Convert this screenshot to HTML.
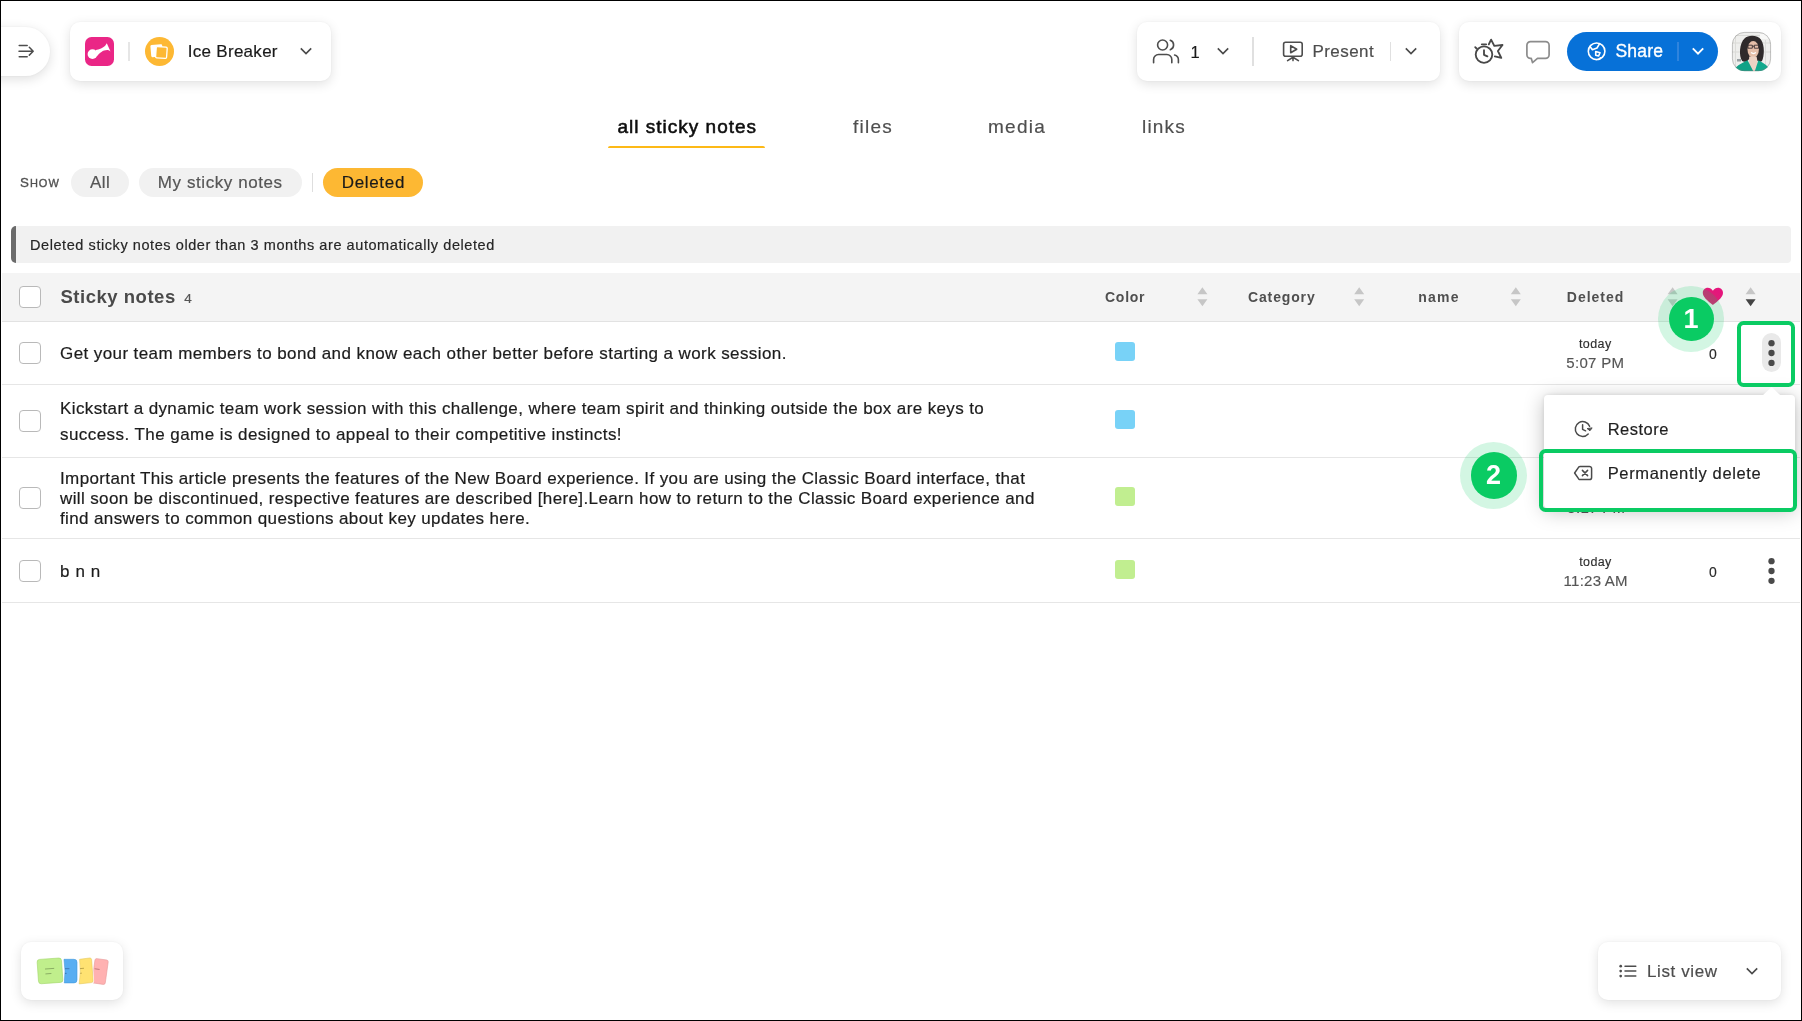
<!DOCTYPE html>
<html lang="en">
<head>
<meta charset="utf-8">
<title>Ice Breaker - Deleted sticky notes</title>
<style>
*{box-sizing:border-box;margin:0;padding:0}
html,body{width:1802px;height:1021px;overflow:hidden;background:#fff}
body{font-family:"Liberation Sans",sans-serif;color:#1f1f1f;position:relative}
.abs{position:absolute}
svg{position:absolute;overflow:visible}
.t{position:absolute;white-space:nowrap;line-height:1}
.med{-webkit-text-stroke:.35px currentColor}
.rg{-webkit-text-stroke:.18px currentColor}
#frame{position:absolute;left:0;top:0;width:1802px;height:1021px;border:1px solid #000;z-index:100;pointer-events:none}
.card{position:absolute;background:#fff;border-radius:10px;box-shadow:0 3px 12px rgba(0,0,0,.12),0 0 3px rgba(0,0,0,.05)}
.pill{position:absolute;top:168px;height:29px;border-radius:15px;background:#f1f1f1}
.cb{position:absolute;left:19px;width:22px;height:22px;border:1px solid #b9b9b9;border-radius:4px;background:#fff}
.rowline{position:absolute;left:2px;width:1798px;height:1px;background:#e6e6e6}
.sw{position:absolute;left:1115px;width:20px;height:19.500px;border-radius:3px}
.hd{position:absolute;white-space:nowrap;line-height:1;font-size:14px;font-weight:bold;color:#4f4f4f}
.row{position:absolute;left:60px;-webkit-text-stroke:.2px #1c1c1c;white-space:nowrap;line-height:1;font-size:17px;letter-spacing:.38px;color:#1c1c1c}
.today{-webkit-text-stroke:.15px currentColor;position:absolute;white-space:nowrap;line-height:1;font-size:12.500px;letter-spacing:.4px;color:#2e2e2e}
.time{-webkit-text-stroke:.15px currentColor;position:absolute;white-space:nowrap;line-height:1;font-size:15px;letter-spacing:.3px;color:#555}
.zero{-webkit-text-stroke:.15px currentColor;position:absolute;white-space:nowrap;line-height:1;font-size:14px;color:#2a2a2a}
.dot{position:absolute;width:6.600px;height:6.600px;border-radius:50%;background:#4a4a4a}
.gbox{position:absolute;border:4px solid #0acb63;border-radius:6.500px}
.gcirc{position:absolute;border-radius:50%;background:#0acb63;color:#fff;font-weight:bold;text-align:center}
.ghalo{position:absolute;border-radius:50%;background:rgba(10,203,99,.18)}
</style>
</head>
<body>
<div id="page" style="position:absolute;left:0;top:0;width:1802px;height:1021px;will-change:transform">

<!-- ===== top bar : sidebar toggle ===== -->
<div id="toggle" class="abs" style="left:-30px;top:27px;width:80px;height:48.500px;border-radius:25px;background:#fff;box-shadow:0 3px 12px rgba(0,0,0,.13),0 0 3px rgba(0,0,0,.05)"></div>
<svg style="left:0;top:0" width="60" height="80" viewBox="0 0 60 80" fill="none" stroke="#4d4d4d" stroke-width="1.500" stroke-linecap="round" stroke-linejoin="round"><path d="M19.200 45.500h8M19 51.200h13.500M19.200 56.800h8M29.300 47.300l3.900 3.900-3.900 3.900"/></svg>

<!-- ===== board title card ===== -->
<div id="titlecard" class="card" style="left:70px;top:22px;width:261px;height:59px"></div>
<div id="logo" class="abs" style="left:84.500px;top:36.500px;width:29px;height:29.200px;border-radius:6.500px;background:#ea2686"></div>
<svg style="left:84.400px;top:36.700px" width="29" height="29" viewBox="0 0 29 29"><circle cx="8.500" cy="17.100" r="4.900" fill="#fff"/><path d="M11.500 13.200C15 12.700 19.500 10.900 21.400 8.600c.6-.8.900-1.600 1.400-2.300l3.700 8.200c-.8-.8-1.600-1.300-2.600-1.400-2.400-.2-4.900.7-6.100 1.600-2.300 1.300-3.300 2.300-4.400 4.300z" fill="#fff"/></svg>
<div class="abs" style="left:128.400px;top:41.500px;width:1.400px;height:19.500px;background:#e6e6e6"></div>
<div id="orange" class="abs" style="left:144.500px;top:36.500px;width:29.500px;height:29.300px;border-radius:50%;background:#fdb833"></div>
<svg style="left:144.500px;top:36.500px" width="30" height="30" viewBox="0 0 30 30"><rect x="5.800" y="7.600" width="11.800" height="12.200" rx="1.200" fill="#fff" transform="rotate(-5 11.700 13.700)"/><rect x="10.900" y="9.900" width="11" height="11.200" rx="1.200" fill="#fdb833" stroke="#fff" stroke-width="1.300" transform="rotate(4 16.400 15.500)"/></svg>
<div id="boardname" class="t rg" style="left:187.800px;top:42.700px;font-size:17px;letter-spacing:.28px;color:#1a1a1a">Ice Breaker</div>
<svg style="left:298.45px;top:44.25px" width="16" height="14" viewBox="-8 -7 16 14" fill="none" stroke="#4a4a4a" stroke-width="1.6" stroke-linejoin="miter"><path d="M-5.200 -2.600L0 2.600L5.200 -2.600"/></svg>

<!-- ===== participants / present card ===== -->
<div id="peoplecard" class="card" style="left:1137px;top:22px;width:303px;height:58.500px"></div>
<svg style="left:1150px;top:36px" width="32" height="30" viewBox="0 0 32 30" fill="none" stroke="#4d4d4d" stroke-width="1.600" stroke-linecap="round" stroke-linejoin="round"><circle cx="12.600" cy="9" r="5"/><path d="M3.600 26.800v-3.300a5 5 0 0 1 5-5h8.200a5 5 0 0 1 5 5v3.300"/><path d="M20.300 4.300a5 5 0 0 1 0 9.400"/><path d="M24.600 19a5 5 0 0 1 3.800 4.800v3"/></svg>
<div id="pcount" class="t rg" style="left:1190.500px;top:43.700px;font-size:16.500px;color:#1a1a1a">1</div>
<svg style="left:1215.25px;top:44.25px" width="16" height="14" viewBox="-8 -7 16 14" fill="none" stroke="#4a4a4a" stroke-width="1.6" stroke-linejoin="miter"><path d="M-5.200 -2.600L0 2.600L5.200 -2.600"/></svg>
<div class="abs" style="left:1252.400px;top:36.500px;width:1.500px;height:29.500px;background:#e0e0e0"></div>
<svg style="left:1280px;top:38px" width="26" height="26" viewBox="0 0 26 26" fill="none" stroke="#4d4d4d" stroke-width="1.600" stroke-linecap="round" stroke-linejoin="round"><rect x="3.600" y="4.200" width="18.600" height="14" rx="2"/><path d="M10.700 7.600v7.200l6-3.600z"/><path d="M13 18.800v3.800M13 19.200l-5.400 3.400M13 19.200l5.400 3.400"/></svg>
<div id="present" class="t rg" style="left:1312.500px;top:42.700px;font-size:17px;letter-spacing:0.420px;color:#4d4d4d">Present</div>
<div class="abs" style="left:1389.800px;top:41.500px;width:1.400px;height:19.500px;background:#e0e0e0"></div>
<svg style="left:1402.60px;top:44.25px" width="16" height="14" viewBox="-8 -7 16 14" fill="none" stroke="#4a4a4a" stroke-width="1.6" stroke-linejoin="miter"><path d="M-5.200 -2.600L0 2.600L5.200 -2.600"/></svg>

<!-- ===== right card: timer, chat, share, avatar ===== -->
<div id="rightcard" class="card" style="left:1459px;top:22px;width:322.300px;height:58.500px"></div>
<svg style="left:1470px;top:34px" width="38" height="34" viewBox="0 0 38 34" fill="none" stroke="#484848" stroke-width="1.850" stroke-linecap="round" stroke-linejoin="round"><circle cx="14" cy="20.600" r="8.300"/><path d="M14 16.200v4.600l3.400 1.600"/><path d="M11.800 10.300h4.400"/><path d="M5.200 13.200l1.300 1.300"/><path d="M18.800 10.400l2.300-4.800 3.200 6.200 8.200-.8-4.600 6 3.400 6.800-6.500-1.400"/></svg>
<svg style="left:1522px;top:36px" width="32" height="32" viewBox="0 0 32 32" fill="none" stroke="#8c8c8c" stroke-width="1.700" stroke-linecap="round" stroke-linejoin="round"><path d="M8.500 5.600h15a3.600 3.600 0 0 1 3.600 3.600v9.600a3.600 3.600 0 0 1-3.600 3.600H15.500l-5 4.200-1.200-4.200H8.500a3.600 3.600 0 0 1-3.600-3.600V9.200a3.600 3.600 0 0 1 3.600-3.600z"/></svg>
<div id="sharebtn" class="abs" style="left:1567.200px;top:32px;width:150.500px;height:38.500px;border-radius:20px;background:#0771d8"></div>
<svg style="left:1585px;top:40px" width="24" height="24" viewBox="0 0 24 24" fill="none" stroke="#fff" stroke-width="1.600" stroke-linecap="round" stroke-linejoin="round"><circle cx="11.600" cy="11.300" r="8.300"/><path d="M5 6.500l2.400 3.300 4.600-1.800 2.600-4.400"/><path d="M10.700 11.500l4.300 1.300-1.400 3.200-2.900-.8z"/><path d="M15.500 17.800l-1.700 1.600"/></svg>
<div id="share" class="t med" style="left:1615.400px;top:42.900px;font-size:17.500px;letter-spacing:0.200px;color:#fff">Share</div>
<div class="abs" style="left:1677.300px;top:41.500px;width:1.300px;height:19.500px;background:#2f84de"></div>
<svg style="left:1690.25px;top:44.25px" width="16" height="14" viewBox="-8 -7 16 14" fill="none" stroke="#fff" stroke-width="1.9" stroke-linejoin="miter"><path d="M-5.200 -2.600L0 2.600L5.200 -2.600"/></svg>
<svg id="avatar" style="left:1732.300px;top:31.600px" width="39" height="39.200" viewBox="0 0 39 39.200"><defs><clipPath id="avc"><rect x="0" y="0" width="39" height="39.200" rx="12.500" ry="12.500"/></clipPath></defs><g clip-path="url(#avc)"><rect width="39" height="39.200" fill="#eeeeec"/><path d="M0 3.500h39M0 11h39M0 20h12M30 20h9" stroke="#d9d9d6" stroke-width="1.200"/><path d="M3.500 0v39M33.500 8v26M28.500 2v8" stroke="#dcdcd9" stroke-width="1"/><rect x="28" y="2" width="8" height="5" fill="#f8f8f7"/><rect x="5" y="27" width="4" height="2.500" fill="#9aa0a3"/><path d="M10.200 29C6.500 24 7.500 11 12.500 6.500 16.500 2.500 26 3 29.200 8c3.600 5.500 3.200 16 .8 21-1.600 1.400-4.600.6-5.600-1.600l-7.600-.2C15.200 30 12 30.400 10.200 29z" fill="#2f2a2b"/><ellipse cx="21.200" cy="17.400" rx="5.700" ry="8.300" fill="#e6bfa9"/><path d="M17.200 24.500h7.400l.8 4.500 1.500 10.200H16l1-10.200z" fill="#eed3c4"/><path d="M16 13.200h4.300v3H16zM22.300 13.200h4.300v3h-4.300zM20.300 14.200h2" fill="none" stroke="#3a3032" stroke-width=".9"/><path d="M19 20.600q2.500 1.900 5 0" stroke="#fff" stroke-width="1.300" fill="none"/><path d="M1.500 39.200C2.500 34.500 9 31.800 15.600 28.200L21.300 39.200z" fill="#10a287"/><path d="M38 39.200c-.5-4.700-5.500-7.500-11.600-11l-3.600 11z" fill="#12a98d"/></g><rect x=".4" y=".4" width="38.200" height="38.400" rx="12.100" fill="none" stroke="rgba(120,120,120,.5)" stroke-width=".8"/></svg>

<!-- ===== tabs ===== -->
<div id="tab1" class="t" style="left:617.500px;top:116.800px;font-size:19px;-webkit-text-stroke:.55px #0d0d0d;letter-spacing:1.000px;color:#0d0d0d">all sticky notes</div>
<div class="abs" style="left:607.500px;top:145.500px;width:157.500px;height:2.700px;border-radius:2px 2px 0 0;background:#fdb916"></div>
<div id="tab2" class="t rg" style="left:853px;top:116.800px;font-size:19px;letter-spacing:1.250px;color:#4f4f4f">files</div>
<div id="tab3" class="t rg" style="left:988.000px;top:116.800px;font-size:19px;letter-spacing:1.250px;color:#4f4f4f">media</div>
<div id="tab4" class="t rg" style="left:1142.000px;top:116.800px;font-size:19px;letter-spacing:1.180px;color:#4f4f4f">links</div>

<!-- ===== filter row ===== -->
<div id="show" class="t med" style="left:20.000px;top:176.000px;font-size:11px;letter-spacing:1.000px;color:#505050"><span style="font-size:13.300px">S</span>HOW</div>
<div id="pAll" class="pill" style="left:70.500px;width:58.500px"></div>
<div id="tAll" class="t rg" style="left:90.100px;top:174px;font-size:17px;letter-spacing:0.400px;color:#555">All</div>
<div id="pMy" class="pill" style="left:139px;width:162.700px"></div>
<div id="tMy" class="t rg" style="left:157.800px;top:174px;font-size:17px;letter-spacing:0.580px;color:#555">My sticky notes</div>
<div class="abs" style="left:311.600px;top:173px;width:1.400px;height:19px;background:#dedede"></div>
<div id="pDel" class="pill" style="left:322.500px;width:100.500px;background:#fdb833"></div>
<div id="tDel" class="t rg" style="left:341.700px;top:174px;font-size:17px;letter-spacing:0.680px;color:#1a1a1a">Deleted</div>

<!-- ===== notice ===== -->
<div id="notice" class="abs" style="left:11px;top:226px;width:1780px;height:37px;background:#f1f1f1;border-left:5px solid #6b6b6b;border-radius:5px 4px 4px 5px"></div>
<div id="noticeT" class="t rg" style="left:30.000px;top:238.000px;font-size:14.500px;letter-spacing:0.570px;color:#262626">Deleted sticky notes older than 3 months are automatically deleted</div>

<!-- ===== table header ===== -->
<div id="thead" class="abs" style="left:2px;top:273px;width:1798px;height:48.500px;background:#f4f4f4"></div>
<div class="rowline" style="top:321.200px;background:#e2e2e2"></div>
<div class="cb" style="top:286px"></div>
<div id="hTitle" class="t" style="left:60.500px;top:288.300px;font-size:18.500px;font-weight:bold;letter-spacing:0.520px;color:#4a4a4a">Sticky notes</div>
<div id="hCount" class="t rg" style="left:184.200px;top:292px;font-size:13.500px;color:#555;letter-spacing:0.000px">4</div>
<div id="hColor" class="hd" style="left:1105.000px;top:290px;letter-spacing:0.750px">Color</div>
<div id="hCat" class="hd" style="left:1248.000px;top:290px;letter-spacing:0.860px">Category</div>
<div id="hName" class="hd" style="left:1418.200px;top:290px;letter-spacing:1.270px">name</div>
<div id="hDel" class="hd" style="left:1566.800px;top:290px;letter-spacing:0.970px">Deleted</div>
<svg style="left:0;top:273px" width="1802" height="48" viewBox="0 273 1802 48"><g fill="#c6c6c6"><path d="M1197.400 294.300l5-7 5 7zM1197.400 299.200h10l-5 7z"/><path d="M1354.200 294.300l5-7 5 7zM1354.200 299.200h10l-5 7z"/><path d="M1510.800 294.300l5-7 5 7zM1510.800 299.200h10l-5 7z"/><path d="M1667.600 294.300l5-7 5 7zM1667.600 299.200h10l-5 7z"/><path d="M1745.600 294.300l5-7 5 7z"/></g><path d="M1745.600 299.200h10l-5 7z" fill="#444"/>
<defs><linearGradient id="hg" x1="0" y1="1" x2="1" y2="0"><stop offset="0" stop-color="#d8276f"/><stop offset="1" stop-color="#e8117f"/></linearGradient></defs>
<path d="M1712.900 305c-1.500-1.500-10.100-7.100-10.100-12.100 0-2.900 2.200-5.100 5-5.100 2 0 3.900 1.100 5.100 3 1.200-1.900 3.100-3 5.100-3 2.800 0 5 2.200 5 5.100 0 5-8.600 10.600-10.100 12.100z" fill="url(#hg)"/></svg>

<!-- ===== row 1 ===== -->
<div class="cb" style="top:342px"></div>
<div id="r1" class="row" style="top:344.500px;letter-spacing:0.410px">Get your team members to bond and know each other better before starting a work session.</div>
<div class="sw" style="top:341.700px;background:#78d2f7"></div>
<div id="td1" class="today" style="left:1579px;top:338.200px">today</div>
<div id="tm1" class="time" style="left:1566.300px;top:355.200px">5:07 PM</div>
<div id="z1" class="zero" style="left:1709px;top:347.300px">0</div>
<div class="abs" style="left:1761.900px;top:333.300px;width:19.200px;height:39.200px;border-radius:10px;background:#e9e9e9"></div>
<svg style="left:1764px;top:336px" width="15" height="34" viewBox="1764 336 15 34" fill="#4a4a4a"><circle cx="1771.500" cy="343.2" r="3.150"/><circle cx="1771.500" cy="353.0" r="3.150"/><circle cx="1771.500" cy="362.9" r="3.150"/></svg>
<div class="rowline" style="top:384.200px"></div>

<!-- ===== row 2 ===== -->
<div class="cb" style="top:410px"></div>
<div id="r2a" class="row" style="top:399.500px">Kickstart a dynamic team work session with this challenge, where team spirit and thinking outside the box are keys to</div>
<div id="r2b" class="row" style="top:425.500px;letter-spacing:0.440px">success. The game is designed to appeal to their competitive instincts!</div>
<div class="sw" style="top:409.500px;background:#78d2f7"></div>
<div class="today" style="left:1579px;top:406px">today</div>
<div class="time" style="left:1567.300px;top:423px">5:13 PM</div>
<div class="zero" style="left:1709px;top:415px">0</div>
<svg style="left:1764px;top:404px" width="15" height="34" viewBox="1764 404 15 34" fill="#4a4a4a"><circle cx="1771.500" cy="411.0" r="3.150"/><circle cx="1771.500" cy="420.8" r="3.150"/><circle cx="1771.500" cy="430.7" r="3.150"/></svg>
<div class="rowline" style="top:457px"></div>

<!-- ===== row 3 ===== -->
<div class="cb" style="top:487px"></div>
<div id="r3a" class="row" style="top:469.800px">Important This article presents the features of the New Board experience. If you are using the Classic Board interface, that</div>
<div id="r3b" class="row" style="top:489.600px">will soon be discontinued, respective features are described [here].Learn how to return to the Classic Board experience and</div>
<div id="r3c" class="row" style="top:510.400px">find answers to common questions about key updates here.</div>
<div class="sw" style="top:486.700px;background:#c1ee90"></div>
<div class="today" style="left:1579px;top:483.200px">today</div>
<div id="tm3" class="time" style="left:1567.300px;top:500.200px">5:17 PM</div>
<div class="zero" style="left:1709px;top:492.300px">0</div>
<svg style="left:1764px;top:481px" width="15" height="34" viewBox="1764 481 15 34" fill="#4a4a4a"><circle cx="1771.500" cy="488.2" r="3.150"/><circle cx="1771.500" cy="498.0" r="3.150"/><circle cx="1771.500" cy="507.9" r="3.150"/></svg>
<div class="rowline" style="top:538px"></div>

<!-- ===== row 4 ===== -->
<div class="cb" style="top:560px"></div>
<div id="r4" class="row" style="top:563px;letter-spacing:0.600px">b n n</div>
<div class="sw" style="top:559.500px;background:#c1ee90"></div>
<div id="td4" class="today" style="left:1579.200px;top:556.200px">today</div>
<div id="tm4" class="time" style="left:1563.600px;top:573.300px;letter-spacing:0.250px">11:23 AM</div>
<div id="z4" class="zero" style="left:1709px;top:565.200px">0</div>
<svg style="left:1764px;top:554px" width="15" height="34" viewBox="1764 554 15 34" fill="#4a4a4a"><circle cx="1771.500" cy="561.2" r="3.150"/><circle cx="1771.500" cy="571.0" r="3.150"/><circle cx="1771.500" cy="580.8" r="3.150"/></svg>
<div class="rowline" style="top:601.700px"></div>

<!-- ===== context menu popup + tutorial highlights ===== -->
<div id="popup" class="abs" style="left:1544px;top:395px;width:251px;height:113px;border-radius:4px;background:#fff;box-shadow:0 3px 20px rgba(0,0,0,.25),0 0 4px rgba(0,0,0,.1)"></div>
<svg style="left:1760px;top:385px" width="24" height="11" viewBox="1760 385 24 11"><path d="M1762.600 395.500L1771.600 387.100 1780.600 395.500z" fill="#fff"/></svg>
<svg style="left:1572px;top:418px" width="24" height="22" viewBox="0 0 24 22" fill="none" stroke="#4a4a4a" stroke-width="1.500" stroke-linecap="round" stroke-linejoin="round"><path d="M17.600 8.300A7.400 7.400 0 1 0 16.200 16"/><path d="M10.600 6.700v4.600l3 1.500"/><path d="M19.900 10.200l-1.900 2.500-2.600-1.900z" fill="#4a4a4a" stroke-width="1"/></svg>
<div id="restore" class="t rg" style="left:1607.700px;top:421.000px;font-size:16.500px;letter-spacing:0.480px;color:#1f1f1f">Restore</div>
<svg style="left:1572px;top:462px" width="24" height="22" viewBox="0 0 24 22" fill="none" stroke="#4a4a4a" stroke-width="1.500" stroke-linecap="round" stroke-linejoin="round"><path d="M8.200 4.400h9.200a2.200 2.200 0 0 1 2.200 2.200v8.800a2.200 2.200 0 0 1-2.200 2.200H8.200a2 2 0 0 1-1.500-.7L2.600 11l4.100-5.900a2 2 0 0 1 1.500-.7z"/><path d="M10.400 8.400l5.200 5.200M15.600 8.400l-5.200 5.200"/></svg>
<div id="permdel" class="t rg" style="left:1607.700px;top:464.900px;font-size:16.500px;letter-spacing:0.640px;color:#1f1f1f">Permanently delete</div>

<div class="gbox" style="left:1737px;top:321px;width:58px;height:66px"></div>
<div class="gbox" style="left:1538.500px;top:449px;width:258.500px;height:63px"></div>

<div class="ghalo" style="left:1658.100px;top:285.900px;width:65.900px;height:65.700px"></div>
<div class="gcirc" style="left:1668.700px;top:296.700px;width:44.900px;height:44.600px"></div>
<div id="n1" class="t" style="left:1683.500px;top:306px;font-size:27px;font-weight:bold;color:#fff">1</div>
<div class="ghalo" style="left:1459.900px;top:441.900px;width:67.400px;height:67.500px"></div>
<div class="gcirc" style="left:1470.500px;top:452.300px;width:46.600px;height:46.900px"></div>
<div id="n2" class="t" style="left:1486px;top:461.600px;font-size:27px;font-weight:bold;color:#fff">2</div>

<!-- ===== bottom-left sticky tray ===== -->
<div id="stickycard" class="card" style="left:21px;top:941.600px;width:102.200px;height:58.400px"></div>
<svg style="left:30px;top:950px" width="86" height="42" viewBox="30 950 86 42"><g stroke-width=".6">
<rect x="93.400" y="959.200" width="13.400" height="24.600" rx="1.800" fill="#ffb1b1" stroke="#e89a9a" transform="rotate(8 100 971.500)"/>
<path d="M79.600 959.300l10-1.300a1.800 1.800 0 0 1 2 1.500l1.500 21.200a1.800 1.800 0 0 1-1.600 1.900l-12.300 1.300z" fill="#fff" stroke="#fff" stroke-width="2" stroke-linejoin="round"/>
<path d="M79.600 959.300l10-1.300a1.800 1.800 0 0 1 2 1.500l1.500 21.200a1.800 1.800 0 0 1-1.600 1.900l-12.300 1.300q2-12 .4-24.600z" fill="#ffe272" stroke="#e6ca5e"/>
<path d="M64 959.300h10a3 3 0 0 1 3 3v17.600a3 3 0 0 1-3 3H64.300z" fill="#fff" stroke="#fff" stroke-width="2.400" stroke-linejoin="round"/>
<path d="M64 959.300h10a3 3 0 0 1 3 3v17.600a3 3 0 0 1-3 3H64.300q1.600-12-.3-23.600z" fill="#58aef2" stroke="#4198dc"/>
<rect x="37.800" y="958.700" width="24.400" height="24.400" rx="2.600" fill="#fff" stroke="#fff" stroke-width="2.200" transform="rotate(-4 50 970.900)"/>
<rect x="37.800" y="958.700" width="24.400" height="24.400" rx="2.600" fill="#c0ef8c" stroke="#a2d66c" transform="rotate(-4 50 970.900)"/></g>
<g stroke-width=".9" stroke-linecap="round"><path d="M45.400 969l8.400-.6M45.800 973.900l5.200-.4" stroke="rgba(60,80,40,.45)"/><path d="M65.400 968.700h3.600M65.400 973.400h.8" stroke="rgba(30,60,110,.5)"/><path d="M80.400 968.600l3.200-.3M80.600 973.300l.8-.1" stroke="rgba(110,90,20,.5)"/><path d="M95 968.800l4.200.6" stroke="rgba(120,50,50,.5)"/></g></svg>

<!-- ===== bottom-right view switcher ===== -->
<div id="listcard" class="card" style="left:1598.300px;top:941.600px;width:183px;height:58.500px"></div>
<svg style="left:1616px;top:960px" width="24" height="22" viewBox="1616 960 24 22"><g fill="#4d4d4d"><circle cx="1620.700" cy="966.200" r="1.350"/><circle cx="1620.700" cy="971.100" r="1.350"/><circle cx="1620.700" cy="976.100" r="1.350"/></g><path d="M1625 966.200h10.800M1625 971.100h10.800M1625 976.100h10.800" stroke="#4d4d4d" stroke-width="1.500" stroke-linecap="round"/></svg>
<div id="listview" class="t rg" style="left:1647.000px;top:963.100px;font-size:17px;letter-spacing:0.610px;color:#4d4d4d">List view</div>
<svg style="left:1744.00px;top:964.05px" width="16" height="14" viewBox="-8 -7 16 14" fill="none" stroke="#4a4a4a" stroke-width="1.6" stroke-linejoin="miter"><path d="M-5.200 -2.600L0 2.600L5.200 -2.600"/></svg>

<div id="frame"></div>
</div>
</body>
</html>
